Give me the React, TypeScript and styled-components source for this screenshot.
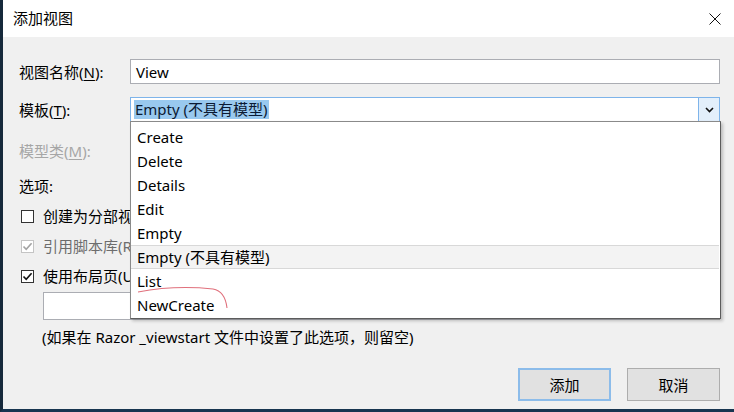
import React from "react";
import styled, { createGlobalStyle, css } from "styled-components";

const GlobalStyle = createGlobalStyle`
  html, body { margin: 0; padding: 0; background: #f0f0f0; }
  body { font-family: "Noto Sans", "Noto Sans CJK SC", sans-serif; }
  * { box-sizing: border-box; }
`;

const Window = styled.div`
  width: 734px;
  height: 412px;
  display: flex;
  flex-direction: column;
  border-left: 3px solid #16293b;
  border-bottom: 3px solid #183550;
  background: #f0f0f0;
  position: relative;
  overflow: hidden;
  color: #000;
  font-size: 15px;
`;

const TitleBar = styled.div`
  height: 37px;
  flex: 0 0 37px;
  background: #fff;
  display: flex;
  align-items: center;
  justify-content: space-between;
  padding: 0 13px 1px 10px;
`;

const Title = styled.span`
  font-size: 15px;
  line-height: 20px;
  color: #000;
`;

const CloseIcon = styled.svg`
  width: 12px;
  height: 12px;
  display: block;
  margin-top: 1px;
`;

const Body = styled.div`
  flex: 1;
  display: flex;
  flex-direction: column;
  padding: 22px 14px 0 16px;
  background: #f0f0f0;
`;

const Row = styled.div<{ $mt?: number; $h?: number }>`
  display: flex;
  align-items: center;
  height: ${(p) => p.$h ?? 25}px;
  margin-top: ${(p) => p.$mt ?? 0}px;
`;

const Label = styled.span<{ $disabled?: boolean }>`
  width: 111px;
  flex: 0 0 111px;
  line-height: 20px;
  white-space: nowrap;
  color: ${(p) => (p.$disabled ? "#a6a6a6" : "#000")};
`;

const Key = styled.span`
  text-decoration: underline;
  text-underline-offset: 2px;
`;

const TextBox = styled.div`
  flex: 1;
  height: 25px;
  border: 1px solid #abadb3;
  background: #fff;
  display: flex;
  align-items: center;
  padding-left: 5px;
  line-height: 20px;
`;

const Combo = styled.div`
  flex: 1;
  height: 25px;
  border: 1px solid #7eb4ea;
  background: #fff;
  display: flex;
  align-items: center;
  position: relative;
`;

const Selected = styled.span`
  margin-left: 3px;
  padding: 0 1px;
  background: #99c9ef;
  line-height: 19px;
  color: #0b1a33;
`;

const DropButton = styled.div`
  margin-left: auto;
  width: 21px;
  height: 100%;
  background: #e3effb;
  border-left: 1px solid #7eb4ea;
  display: flex;
  align-items: center;
  justify-content: center;
`;

const DropList = styled.div`
  position: absolute;
  top: 100%;
  left: -1px;
  right: -2px;
  background: #fff;
  border: 1px solid #8a8a8a;
  border-right-color: #5c5c5c;
  border-bottom-color: #5c5c5c;
  box-shadow: 2px 2px 3px rgba(0, 0, 0, 0.22);
  padding: 3px 1px 1px 0;
  z-index: 5;
`;

const Item = styled.div<{ $hover?: boolean }>`
  height: 24px;
  line-height: 24px;
  padding-left: 6px;
  white-space: nowrap;
  ${(p) =>
    p.$hover &&
    css`
      background: #f3f3f3;
      border-top: 1px solid #d8d8d8;
      border-bottom: 1px solid #d8d8d8;
      line-height: 22px;
    `}
`;

const Annotation = styled.svg`
  position: absolute;
  left: 0;
  top: 0;
  width: 200px;
  height: 200px;
  pointer-events: none;
  overflow: visible;
`;

const CheckRow = styled.div<{ $mt?: number }>`
  display: flex;
  align-items: center;
  height: 30px;
  margin-top: ${(p) => p.$mt ?? 0}px;
`;

const Box = styled.div<{ $disabled?: boolean }>`
  width: 13px;
  height: 13px;
  margin-left: 2px;
  border: 1px solid ${(p) => (p.$disabled ? "#c4c4c4" : "#333")};
  background: #fff;
  display: flex;
  align-items: center;
  justify-content: center;
`;

const CheckLabel = styled.span<{ $disabled?: boolean }>`
  margin-left: 9px;
  line-height: 20px;
  white-space: nowrap;
  color: ${(p) => (p.$disabled ? "#6d6d6d" : "#000")};
`;

const LayoutRow = styled.div`
  display: flex;
  height: 28px;
  margin-top: 1px;
  padding-left: 24px;
`;

const LayoutInput = styled.div`
  flex: 1;
  border: 1px solid #abadb3;
  background: #fff;
`;

const BrowseButton = styled.div`
  width: 32px;
  border: 1px solid #adadad;
  background: #e1e1e1;
`;

const Note = styled.div`
  margin-top: 7px;
  padding-left: 23px;
  line-height: 20px;
  white-space: nowrap;
`;

const Footer = styled.div`
  display: flex;
  justify-content: flex-end;
  gap: 16px;
  margin-top: 21px;
`;

const Button = styled.div<{ $primary?: boolean }>`
  width: 93px;
  height: 33px;
  display: flex;
  align-items: center;
  justify-content: center;
  background: #e1e1e1;
  border: ${(p) => (p.$primary ? "2px solid #8cbcea" : "1px solid #adadad")};
  line-height: 20px;
`;

const CheckMark: React.FC<{ color: string }> = ({ color }) => (
  <svg width="11" height="11" viewBox="0 0 11 11">
    <path d="M1.5 5.5 L4.2 8.3 L9.6 2.2" fill="none" stroke={color} strokeWidth="1.6" />
  </svg>
);

const items = ["Create", "Delete", "Details", "Edit", "Empty", "Empty (不具有模型)", "List", "NewCreate"];

export default function App() {
  return (
    <>
      <GlobalStyle />
      <Window>
        <TitleBar>
          <Title>添加视图</Title>
          <CloseIcon viewBox="0 0 12 12">
            <path d="M0.5 0.5 L11.5 11.5 M11.5 0.5 L0.5 11.5" stroke="#111" strokeWidth="1" fill="none" />
          </CloseIcon>
        </TitleBar>
        <Body>
          <Row>
            <Label>
              视图名称(<Key>N</Key>):
            </Label>
            <TextBox>View</TextBox>
          </Row>
          <Row $mt={13}>
            <Label>
              模板(<Key>T</Key>):
            </Label>
            <Combo>
              <Selected>Empty (不具有模型)</Selected>
              <DropButton>
                <svg width="9" height="6" viewBox="0 0 9 6">
                  <path d="M1 1 L4.5 4.5 L8 1" fill="none" stroke="#111" strokeWidth="1.6" />
                </svg>
              </DropButton>
              <DropList>
                {items.map((it) => (
                  <Item key={it} $hover={it === "Empty (不具有模型)"}>
                    {it}
                  </Item>
                ))}
                <Annotation viewBox="0 0 200 200">
                  <path d="M7 170 Q44 163 82 167 Q94 169 96 186" fill="none" stroke="#e0707c" strokeWidth="1.1" />
                </Annotation>
              </DropList>
            </Combo>
          </Row>
          <Row $mt={16}>
            <Label $disabled>
              模型类(<Key>M</Key>):
            </Label>
          </Row>
          <Row $mt={10}>
            <Label>选项:</Label>
          </Row>
          <CheckRow $mt={3}>
            <Box />
            <CheckLabel>创建为分部视图(C)</CheckLabel>
          </CheckRow>
          <CheckRow>
            <Box $disabled>
              <CheckMark color="#a3a3a3" />
            </Box>
            <CheckLabel $disabled>引用脚本库(R)</CheckLabel>
          </CheckRow>
          <CheckRow>
            <Box>
              <CheckMark color="#111" />
            </Box>
            <CheckLabel>使用布局页(U)</CheckLabel>
          </CheckRow>
          <LayoutRow>
            <LayoutInput />
            <BrowseButton />
          </LayoutRow>
          <Note>(如果在 Razor _viewstart 文件中设置了此选项，则留空)</Note>
          <Footer>
            <Button $primary>添加</Button>
            <Button>取消</Button>
          </Footer>
        </Body>
      </Window>
    </>
  );
}
